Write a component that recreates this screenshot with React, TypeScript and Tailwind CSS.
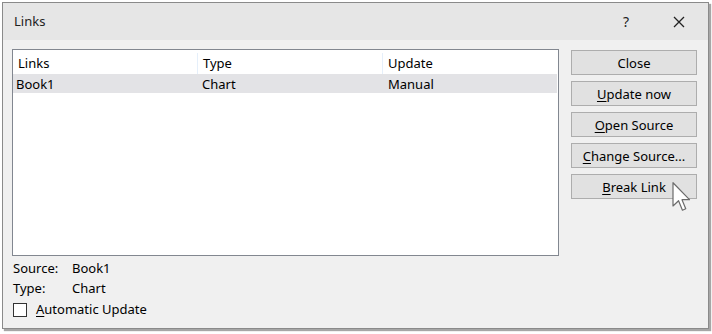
import React from "react";

const font = { fontFamily: '"Noto Sans", "Open Sans", sans-serif' };

function Btn({ label, u }: { label: string; u?: number }) {
  return (
    <div className="h-[25px] w-[126px] border border-[#adadad] bg-[#e1e1e1] flex items-center justify-center pt-[2px] text-[13px] text-[#000] leading-none">
      {u === undefined ? (
        label
      ) : (
        <span>
          {label.slice(0, u)}
          <span className="underline underline-offset-2">{label[u]}</span>
          {label.slice(u + 1)}
        </span>
      )}
    </div>
  );
}

export default function App() {
  return (
    <div className="w-[712px] h-[334px] bg-white pl-[2px] pt-[2px]" style={font}>
      <div className="w-[707px] h-[327px] flex flex-col border border-[#8a8a8a] bg-[#f0f0f0] shadow-[2px_2px_1px_rgba(0,0,0,0.35)] text-[13px] text-[#000]">
        {/* title bar */}
        <div className="h-[37px] bg-[#e6e6e6] flex items-center pl-[11px] pr-[20px]">
          <div className="text-[13px] text-[#222] flex-1 pt-[1px]">Links</div>
          <div className="text-[14px] mr-[44px] text-[#222]">?</div>
          <svg width="12" height="12" viewBox="0 0 12 12" className="mr-[3px]">
            <path d="M1 1 L11 11 M11 1 L1 11" stroke="#222" strokeWidth="1.3" />
          </svg>
        </div>
        {/* body */}
        <div className="flex flex-1 pl-[9px] pt-[9px]">
          <div className="flex flex-col w-[547px]">
            <div className="h-[207px] border border-[#828790] bg-white flex flex-col">
              <div className="flex h-[24px] items-center pt-[3px]">
                <div className="w-[185px] h-full flex items-center pl-[5px] border-r border-[#e5effa]">Links</div>
                <div className="w-[185px] h-full flex items-center pl-[5px] border-r border-[#e5effa]">Type</div>
                <div className="flex-1 h-full flex items-center pl-[5px]">Update</div>
              </div>
              <div className="flex h-[19px] items-center bg-[#e3e3e6] mr-[1px] pt-[2px]">
                <div className="w-[185px] pl-[3px]">Book1</div>
                <div className="w-[186px] pl-[4px]">Chart</div>
                <div className="flex-1 pl-[4px]">Manual</div>
              </div>
            </div>
            <div className="flex pl-[1px] mt-[4px] h-[18px] items-center">
              <div className="w-[59px]">Source:</div>
              <div>Book1</div>
            </div>
            <div className="flex pl-[1px] mt-[2px] h-[18px] items-center">
              <div className="w-[59px]">Type:</div>
              <div>Chart</div>
            </div>
            <div className="flex items-center mt-[2px] pl-[1px]">
              <div className="w-[14px] h-[14px] border border-[#333] bg-white mr-[9px]" />
              <span>
                <span className="underline underline-offset-2">A</span>utomatic Update
              </span>
            </div>
          </div>
          <div className="flex flex-col gap-[6px] ml-[12px] pt-[1px] relative">
            <Btn label="Close" />
            <Btn label="Update now" u={0} />
            <Btn label="Open Source" u={0} />
            <Btn label="Change Source..." u={0} />
            <Btn label="Break Link" u={0} />
            <svg
              width="20"
              height="30"
              viewBox="0 0 13 20"
              className="absolute left-[101px] top-[133px]"
            >
              <path
                d="M0.5 0.5 L0.5 16 L4.2 12.5 L6.8 18.8 L9 17.8 L6.5 11.8 L11.5 11.8 Z"
                fill="white"
                stroke="#6b6b6b"
                strokeWidth="0.8"
                strokeLinejoin="round"
              />
            </svg>
          </div>
        </div>
      </div>
    </div>
  );
}
